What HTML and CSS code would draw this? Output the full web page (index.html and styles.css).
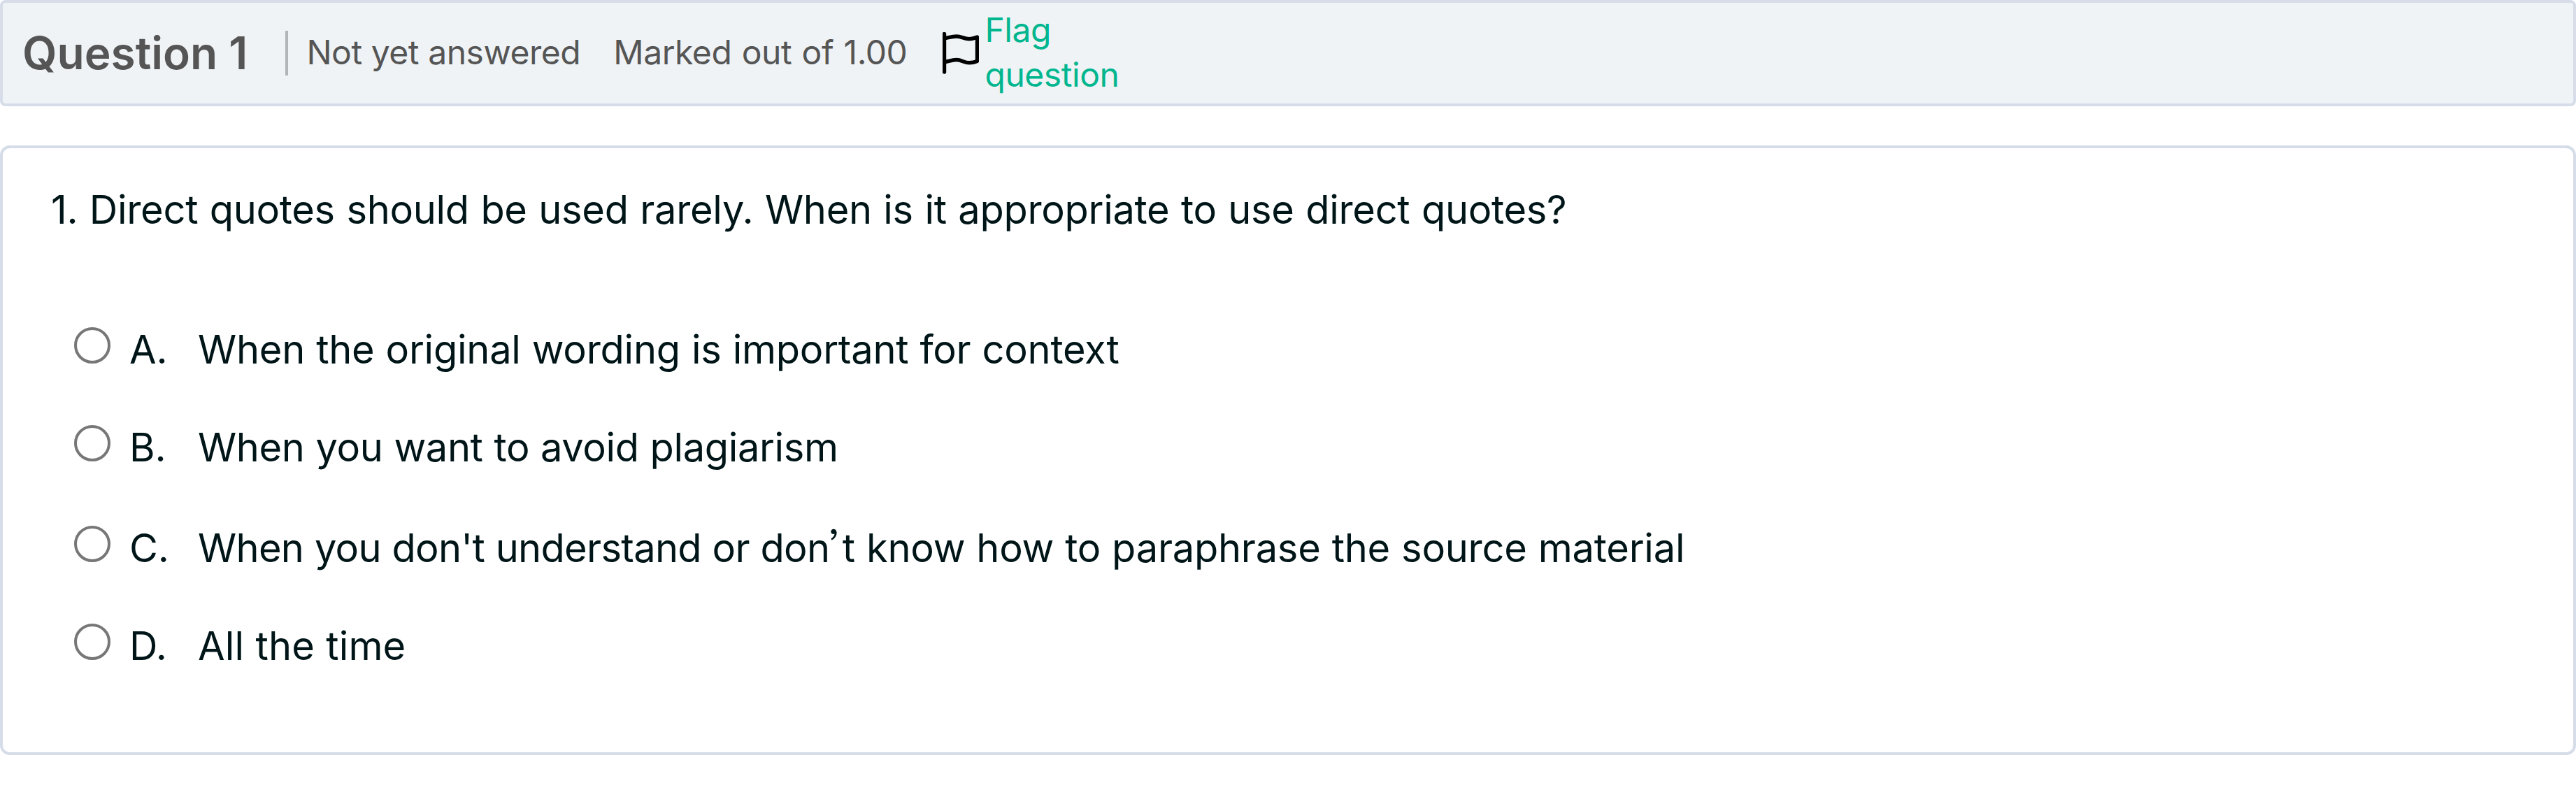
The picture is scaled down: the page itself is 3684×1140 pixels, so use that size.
FILE: index.html
```
<!DOCTYPE html>
<html lang="en">
<head>
  <meta charset="UTF-8">
  <meta name="viewport" content="width=device-width, initial-scale=1.0">
  <title>Question 1</title>
  <link rel="stylesheet" href="styles.css">
</head>
<body>
  <div class="info">
    <h3 class="number">Question 1</h3>
    <div class="state">Not yet answered</div>
    <div class="grade">Marked out of 1.00</div>
    <div class="flag">
      <svg class="flag-icon" viewBox="0 0 52 60">
        <path d="M2.5 2.5V57M2.5 8.7C8 8 13 6 20 6C27 6 31 9.7 38 9.7C43 9.7 46 8.5 49.5 7V41.5C46 43 43 43.8 38 43.8C31 43.8 27 39.5 20 39.5C13 39.5 8 42 2.5 42.7" />
      </svg>
      <a class="flag-link">Flag question</a>
    </div>
  </div>

  <div class="content">
    <p class="qtext">1. Direct quotes should be used rarely. When is it appropriate to use direct quotes?</p>
    <div class="answers">
      <label class="answer">
        <input type="radio" name="q1">
        <span class="letter">A.</span>
        <span class="text">When the original wording is important for context</span>
      </label>
      <label class="answer">
        <input type="radio" name="q1">
        <span class="letter">B.</span>
        <span class="text snug">When you want to avoid plagiarism</span>
      </label>
      <label class="answer tall">
        <input type="radio" name="q1">
        <span class="letter">C.</span>
        <span class="text"><span class="tight">When you don't understand or don</span><span class="quote">’</span>t know how to paraphrase the source material</span>
      </label>
      <label class="answer">
        <input type="radio" name="q1">
        <span class="letter">D.</span>
        <span class="text loose">All the time</span>
      </label>
    </div>
  </div>
</body>
</html>
```
FILE: styles.css
```
* {
  box-sizing: border-box;
}

body {
  font-family: Inter, sans-serif;
  background: #fff;
  color: #001518;
  margin: 0;
}

.info {
  display: flex;
  align-items: center;
  height: 152px;
  padding-left: 28px;
  background: #eff3f6;
  border: 4px solid #d6dde9;
  border-radius: 8px;
  color: #555;
  font-size: 48px;
  line-height: 64px;
  letter-spacing: -0.45px;
}

.number {
  margin: 0 53.7px 0 0;
  font-size: 64px;
  font-weight: 600;
  letter-spacing: 0;
}

.state {
  margin-right: 47px;
  padding: 0 0 3px 30.4px;
  background: linear-gradient(#b1b5b8, #b1b5b8) left center / 4px 64px no-repeat;
}

.grade {
  margin-right: 51px;
  padding-bottom: 3px;
  word-spacing: 1.3px;
}

.flag {
  display: flex;
  align-items: center;
}

.flag-icon {
  width: 52px;
  height: 60px;
  margin-right: 8px;
  fill: none;
  stroke: #000;
  stroke-width: 5.4;
  stroke-linecap: round;
  stroke-linejoin: round;
}

.flag-link {
  width: 200px;
  padding-bottom: 3px;
  color: #00b68f;
}

.content {
  height: 872px;
  margin-top: 56px;
  padding: 46px 68px;
  border: 4px solid #d6dde9;
  border-radius: 14px;
  font-size: 56px;
  line-height: 84px;
  letter-spacing: -0.25px;
}

.qtext {
  margin: 0 0 116px;
  padding-left: 1px;
  letter-spacing: -0.3px;
  word-spacing: 1.1px;
}

.answers {
  display: flex;
  flex-direction: column;
  gap: 56px;
  padding-left: 34px;
}

.answer {
  display: flex;
  height: 84px;
  word-spacing: 0.6px;
}

.answer.tall {
  margin-top: 4px;
}

.answer input {
  appearance: none;
  width: 52px;
  height: 52px;
  margin: 10px 27px 0 0;
  border: 4px solid #777;
  border-radius: 50%;
}

.letter {
  width: 98px;
}

.snug {
  letter-spacing: -0.38px;
}

.tight {
  letter-spacing: -0.7px;
}

.loose {
  letter-spacing: 0.1px;
}

.quote {
  display: inline-block;
  width: 18.5px;
  line-height: 0;
  font-family: "Noto Sans CJK SC", sans-serif;
  font-feature-settings: "palt";
}
```
